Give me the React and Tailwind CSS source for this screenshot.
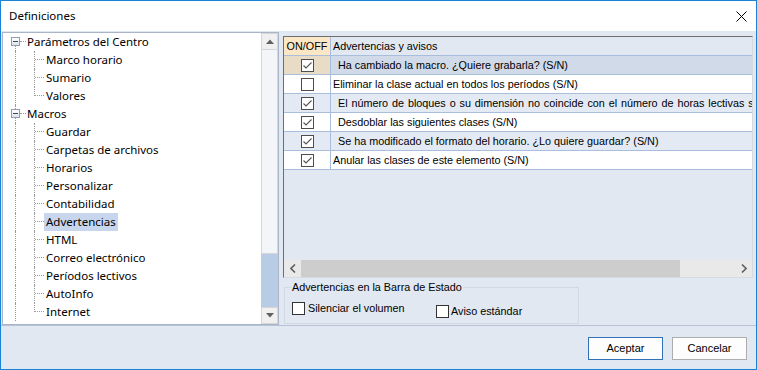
import React from 'react'

// Tree items on the left; root items carry an expander box
const TREE = [
  { label: 'Parámetros del Centro', root: true, first: true },
  { label: 'Marco horario' },
  { label: 'Sumario' },
  { label: 'Valores', last: true },
  { label: 'Macros', root: true },
  { label: 'Guardar' },
  { label: 'Carpetas de archivos' },
  { label: 'Horarios' },
  { label: 'Personalizar' },
  { label: 'Contabilidad' },
  { label: 'Advertencias', selected: true },
  { label: 'HTML' },
  { label: 'Correo electrónico' },
  { label: 'Períodos lectivos' },
  { label: 'AutoInfo' },
  { label: 'Internet', last: true },
]

// Warning rows in the grid
const ROWS = [
  { on: true,  indent: true,  text: 'Ha cambiado la macro. ¿Quiere grabarla? (S/N)', bg: 'bg-[#d1dae9]', cell: 'bg-[#e8dcc6]' },
  { on: false, indent: false, text: 'Eliminar la clase actual en todos los períodos (S/N)', bg: 'bg-white', cell: 'bg-white' },
  { on: true,  indent: true,  text: 'El número de bloques o su dimensión no coincide con el número de horas lectivas semanales (S/N)', bg: 'bg-[#e4eaf3]', cell: 'bg-[#e4eaf3]', wide: true },
  { on: true,  indent: true,  text: 'Desdoblar las siguientes clases (S/N)', bg: 'bg-white', cell: 'bg-white' },
  { on: true,  indent: true,  text: 'Se ha modificado el formato del horario. ¿Lo quiere guardar? (S/N)', bg: 'bg-[#e4eaf3]', cell: 'bg-[#e4eaf3]' },
  { on: true,  indent: false, text: 'Anular las clases de este elemento (S/N)', bg: 'bg-white', cell: 'bg-white' },
]

function CheckBox({ checked, dark }) {
  return (
    <span className={`w-[13px] h-[13px] shrink-0 bg-white border ${dark ? 'border-[#333333]' : 'border-[#4d4d4d]'} flex items-center justify-center`}>
      {checked && (
        <svg width="11" height="11" viewBox="0 0 11 11">
          <path d="M1.5 5.5 L4 8 L9.5 2.5" fill="none" stroke="#555555" strokeWidth="1.1" />
        </svg>
      )}
    </span>
  )
}

function TreeRow({ item }) {
  const dot = 'absolute border-dotted border-[#9a9a9a]'
  if (item.root) {
    return (
      <div className="relative h-[18px] shrink-0 leading-[18px] pl-[24px]">
        <span className={`${dot} left-[12px] border-l ${item.first ? 'top-[13px] h-[5px]' : 'top-0 h-[18px]'}`} />
        <span className={`${dot} left-[17px] top-[8px] w-[6px] border-t`} />
        <span className="absolute left-[8px] top-[4px] w-[9px] h-[9px] border border-[#8f9cb1] bg-gradient-to-b from-white to-[#dde3ea] flex items-center justify-center">
          <span className="w-[5px] h-px bg-[#3a475c]" />
        </span>
        <span>{item.label}</span>
      </div>
    )
  }
  return (
    <div className="relative h-[18px] shrink-0 leading-[18px] pl-[41px]">
      <span className={`${dot} left-[12px] top-0 h-[18px] border-l`} />
      <span className={`${dot} left-[31px] top-0 border-l ${item.last ? 'h-[9px]' : 'h-[18px]'}`} />
      <span className={`${dot} left-[32px] top-[8px] w-[9px] border-t`} />
      <span className={`px-[2px] inline-block h-[18px] ${item.selected ? 'bg-[#c7d6ec]' : ''}`}>{item.label}</span>
    </div>
  )
}

export default function App() {
  return (
    <div className="w-[757px] h-[370px] border border-[#1883d7] bg-[#e1e8f1] flex flex-col overflow-hidden text-black font-['Liberation_Sans',Arial,sans-serif] text-[10.8px]">
      {/* ── Title bar ─────────────────────────────── */}
      <div className="h-[30px] shrink-0 bg-white flex items-center justify-between pl-[8px] pr-[9px]">
        <span className="font-['Noto_Sans',sans-serif] text-[11.5px]">Definiciones</span>
        <svg width="11" height="11" viewBox="0 0 11 11">
          <path d="M0.5 0.5 L10.5 10.5 M10.5 0.5 L0.5 10.5" stroke="#000000" strokeWidth="1" />
        </svg>
      </div>

      {/* ── Main area ─────────────────────────────── */}
      <div className="h-[295px] shrink-0 flex border-b border-[#b7c3d4]">
        {/* tree */}
        <div className="mt-[1px] ml-[1px] w-[277px] h-[293px] border border-[#aab6c8] bg-white flex">
          <div className="flex-1 flex flex-col overflow-hidden font-['Noto_Sans',sans-serif] text-[11.5px]">
            {TREE.map(item => <TreeRow key={item.label} item={item} />)}
          </div>
          <div className="w-[17px] flex flex-col">
            <div className="h-[17px] border border-[#d6d6d6] bg-[#f0f0f0] flex items-center justify-center">
              <svg width="8" height="5" viewBox="0 0 8 5"><path d="M0 5 L4 0.5 L8 5 Z" fill="#606060" /></svg>
            </div>
            <div className="h-[204px] border-x border-b border-[#d6d6d6] bg-[#f3f5f9]" />
            <div className="h-[53px] bg-[#b9cce6]" />
            <div className="h-[17px] border border-[#d6d6d6] bg-[#f0f0f0] flex items-center justify-center">
              <svg width="8" height="5" viewBox="0 0 8 5"><path d="M0 0 L4 4.5 L8 0 Z" fill="#606060" /></svg>
            </div>
          </div>
        </div>

        {/* right side */}
        <div className="ml-[4px] w-[470px] flex flex-col">
          {/* grid */}
          <div className="mt-[5px] h-[242px] border-t border-l border-[#6e6e6e] border-r border-b border-r-[#d6dbe2] border-b-[#d6dbe2] flex flex-col overflow-hidden">
            <div className="h-[19px] shrink-0 flex border-b border-[#a8bedc]">
              <div className="w-[47px] shrink-0 border-r border-[#a8bedc] bg-[#fbe6c5] flex items-center justify-center">ON/OFF</div>
              <div className="flex-1 pl-[2px] flex items-center bg-[#e1e8f1]">Advertencias y avisos</div>
            </div>
            {ROWS.map(row => (
              <div key={row.text} className={`h-[19px] shrink-0 flex border-b border-[#a8bedc] ${row.bg}`}>
                <div className={`w-[47px] shrink-0 border-r border-[#a8bedc] flex items-center justify-center ${row.cell}`}>
                  <CheckBox checked={row.on} />
                </div>
                <div className={`flex-1 flex items-center whitespace-nowrap overflow-hidden ${row.indent ? 'pl-[7px]' : 'pl-[2px]'} ${row.wide ? '[word-spacing:0.9px]' : ''}`}>
                  {row.text}
                </div>
              </div>
            ))}
            <div className="flex-1" />
            <div className="h-[17px] shrink-0 flex bg-[#e9e9e9]">
              <div className="w-[17px] flex items-center justify-center">
                <svg width="6" height="9" viewBox="0 0 6 9"><path d="M5 0.5 L1 4.5 L5 8.5" fill="none" stroke="#606060" strokeWidth="1.6" /></svg>
              </div>
              <div className="w-[379px] bg-[#cdcdcd]" />
              <div className="flex-1" />
              <div className="w-[17px] flex items-center justify-center">
                <svg width="6" height="9" viewBox="0 0 6 9"><path d="M1 0.5 L5 4.5 L1 8.5" fill="none" stroke="#606060" strokeWidth="1.6" /></svg>
              </div>
            </div>
          </div>

          {/* status bar warnings group */}
          <fieldset className="mt-[3px] ml-[1px] w-[295px] h-[43px] border border-[#d2d9e3]">
            <legend className="ml-[6px] px-[1px] leading-[13px]">Advertencias en la Barra de Estado</legend>
            <div className="flex items-start pl-[7px] mt-[6px]">
              <label className="w-[144px] flex items-center gap-[3px]">
                <CheckBox dark />
                <span>Silenciar el volumen</span>
              </label>
              <label className="mt-[3px] flex items-center gap-[2px]">
                <CheckBox dark />
                <span>Aviso estándar</span>
              </label>
            </div>
          </fieldset>
        </div>
      </div>

      {/* ── Footer buttons ────────────────────────── */}
      <div className="flex justify-end gap-[9px] pt-[11px] pr-[9px]">
        <button className="w-[75px] h-[23px] border border-[#2f72b9] bg-[#fdfdfd] text-[11px]">Aceptar</button>
        <button className="w-[75px] h-[23px] border border-[#adadad] bg-[#fdfdfd] text-[11px]">Cancelar</button>
      </div>
    </div>
  )
}
